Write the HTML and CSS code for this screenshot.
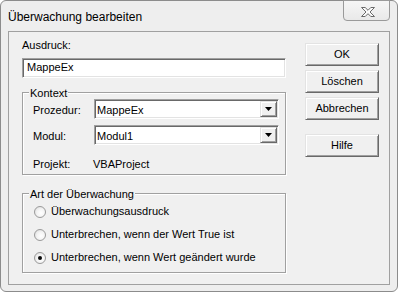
FILE: index.html
```html
<!DOCTYPE html>
<html lang="de">
<head>
<meta charset="utf-8">
<title>Überwachung bearbeiten</title>
<link rel="stylesheet" href="styles.css">
</head>
<body>
<div class="window">
  <div class="titlebar">Überwachung bearbeiten</div>
  <div class="close">
    <svg width="14" height="10" viewBox="0 0 14 10"><polygon points="0.5,0.5 4.2,0.5 7,3.3 9.8,0.5 13.5,0.5 9,5 13.5,9.5 9.8,9.5 7,6.7 4.2,9.5 0.5,9.5 5,5" fill="#fafafa" stroke="#6a6a6a" stroke-width="1" stroke-linejoin="round"/></svg>
  </div>
  <div class="client">
    <div class="main">
      <div class="label">Ausdruck:</div>
      <div class="textbox sunken">MappeEx</div>
      <div class="group kontext">
        <span class="legend">Kontext</span>
        <div class="row">
          <span class="rlabel">Prozedur:</span>
          <div class="combo sunken">
            <span class="ctext">MappeEx</span>
            <span class="dropbtn raised"><svg width="7" height="4" viewBox="0 0 7 4"><polygon points="0,0 7,0 3.5,4" fill="#000"/></svg></span>
          </div>
        </div>
        <div class="row">
          <span class="rlabel">Modul:</span>
          <div class="combo sunken">
            <span class="ctext">Modul1</span>
            <span class="dropbtn raised"><svg width="7" height="4" viewBox="0 0 7 4"><polygon points="0,0 7,0 3.5,4" fill="#000"/></svg></span>
          </div>
        </div>
        <div class="info">
          <span class="ilabel">Projekt:</span>
          <span>VBAProject</span>
        </div>
      </div>
      <div class="group art">
        <span class="legend">Art der Überwachung</span>
        <div class="radio-row"><span class="radio"></span><span>Überwachungsausdruck</span></div>
        <div class="radio-row"><span class="radio"></span><span>Unterbrechen, wenn der Wert True ist</span></div>
        <div class="radio-row"><span class="radio checked"></span><span>Unterbrechen, wenn Wert geändert wurde</span></div>
      </div>
    </div>
    <div class="buttons">
      <div class="btn raised default">OK</div>
      <div class="btn raised">Löschen</div>
      <div class="btn raised">Abbrechen</div>
      <div class="btn raised help">Hilfe</div>
    </div>
  </div>
</div>
</body>
</html>
```
FILE: styles.css
```css
html, body {
  margin: 0;
  background: #ffffff;
}

.window {
  position: relative;
  width: 398px;
  height: 292px;
  box-sizing: border-box;
  border: 1px solid #8c8c8c;
  border-radius: 6px;
  background: #eeeeee;
  display: flex;
  flex-direction: column;
  font-family: "Liberation Sans", Arial, sans-serif;
  font-size: 11px;
  color: #000;
}

.titlebar {
  height: 30px;
  box-sizing: border-box;
  padding: 9px 0 0 7px;
  font-size: 12px;
  line-height: 15px;
}

.close {
  position: absolute;
  top: -1px;
  right: 7px;
  width: 47px;
  height: 21px;
  box-sizing: border-box;
  border: 1px solid #9a9a9a;
  border-radius: 0 0 4px 4px;
  background: linear-gradient(#f6f6f6, #e9e9e9);
  display: flex;
  align-items: center;
  justify-content: center;
  padding-top: 2px;
  padding-left: 2px;
}

.close svg { display: block; }

.client {
  margin: 0 7px 6px 7px;
  height: 254px;
  box-sizing: border-box;
  border: 1px solid #a0a0a0;
  background: #f0f0f0;
  display: flex;
  padding: 6px 0 0 13px;
}

.main {
  width: 264px;
  display: flex;
  flex-direction: column;
}

.label {
  height: 15px;
  line-height: 15px;
}

.sunken {
  border: 1px solid;
  border-color: #a0a0a0 #ffffff #ffffff #a0a0a0;
  box-shadow: inset 1px 1px 0 #696969, inset -1px -1px 0 #e3e3e3;
  background: #ffffff;
  box-sizing: border-box;
}

.raised {
  border: 1px solid;
  border-color: #e3e3e3 #696969 #696969 #e3e3e3;
  box-shadow: inset 1px 1px 0 #ffffff, inset -1px -1px 0 #a0a0a0;
  background: #f0f0f0;
  box-sizing: border-box;
}

.textbox {
  margin-top: 5px;
  height: 20px;
  padding: 2px 0 0 4px;
  line-height: 13px;
}

.group {
  position: relative;
  border: 1px solid #a0a0a0;
  box-shadow: inset 1px 1px 0 #ffffff, 1px 1px 0 #ffffff;
  box-sizing: border-box;
}

.legend {
  position: absolute;
  left: 6px;
  top: -6px;
  padding: 0 1px;
  background: #f0f0f0;
  line-height: 13px;
}

.kontext {
  margin-top: 14px;
  height: 83px;
  padding: 6px 0 0 10px;
}

.row {
  display: flex;
  align-items: flex-start;
  height: 20px;
}

.row + .row { margin-top: 6px; }

.rlabel {
  width: 61px;
  padding-top: 5px;
  line-height: 13px;
}

.combo {
  width: 185px;
  height: 20px;
  padding: 1px;
  display: flex;
}

.ctext {
  flex: 1;
  padding: 3px 0 0 1px;
  line-height: 13px;
}

.dropbtn {
  width: 17px;
  height: 16px;
  display: flex;
  align-items: center;
  justify-content: center;
}

.dropbtn svg { display: block; }

.info {
  margin-top: 12px;
  display: flex;
  line-height: 15px;
}

.ilabel { width: 60px; }

.art {
  margin-top: 18px;
  height: 80px;
  padding: 6px 0 0 11px;
}

.radio-row {
  height: 23px;
  display: flex;
  align-items: center;
  line-height: 13px;
}

.radio {
  width: 12px;
  height: 12px;
  margin-right: 5px;
  box-sizing: border-box;
  border-radius: 50%;
  border: 1px solid #9a9a9a;
  background: radial-gradient(circle at 60% 60%, #ffffff 0%, #f4f4f4 45%, #d8d8d8 100%);
  display: flex;
  align-items: center;
  justify-content: center;
}

.radio.checked::after {
  content: "";
  width: 4px;
  height: 4px;
  border-radius: 50%;
  background: #0a0a0a;
}

.buttons {
  margin-left: 19px;
  padding-top: 5px;
  width: 74px;
  display: flex;
  flex-direction: column;
  gap: 4px;
}

.btn {
  height: 23px;
  display: flex;
  align-items: center;
  justify-content: center;
  line-height: 13px;
}

.btn.help { margin-top: 10px; }
```
